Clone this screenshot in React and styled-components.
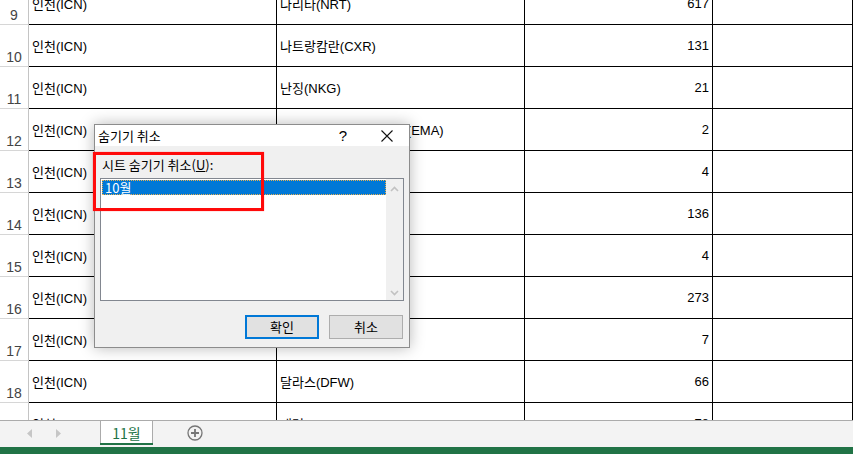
import React from 'react'
import styled, { createGlobalStyle } from 'styled-components'

const GlobalStyle = createGlobalStyle`
  html, body {
    margin: 0;
    padding: 0;
    overflow: hidden;
    background: #fff;
  }
  * { box-sizing: border-box; }
`

const Page = styled.div`
  position: relative;
  width: 853px;
  height: 454px;
  display: flex;
  flex-direction: column;
  overflow: hidden;
  font-family: "Liberation Sans", "Noto Sans CJK KR", sans-serif;
`

const Sheet = styled.div`
  height: 420px;
  overflow: hidden;
  flex-shrink: 0;
`

const Rows = styled.div`
  margin-top: -17px;
  display: flex;
  flex-direction: column;
`

const Row = styled.div`
  display: grid;
  grid-template-columns: 29px 248px 248px 188px 1fr;
  height: 42px;
`

const RowHead = styled.div`
  border-right: 1px solid #c4c4c4;
  border-bottom: 1px solid #d6d6d6;
  display: flex;
  align-items: flex-end;
  justify-content: center;
  padding-bottom: 1px;
  font-size: 14px;
  color: #444;
  line-height: 16px;
`

const Cell = styled.div`
  border-right: 1px solid #000;
  border-bottom: 1px solid #000;
  display: flex;
  align-items: center;
  justify-content: ${p => (p.$right ? 'flex-end' : 'flex-start')};
  padding: 0 3px 0 ${p => (p.$right ? '0' : '3px')};
  font-size: 13px;
  color: #000;
  white-space: pre;
  overflow: hidden;
`

const TabBar = styled.div`
  height: 27px;
  background: #f3f3f3;
  border-top: 1px solid #ababab;
  display: flex;
  align-items: flex-start;
`

const NavGroup = styled.div`
  width: 100px;
  height: 24px;
  display: flex;
  align-items: center;
  gap: 21px;
  padding-left: 25px;
`

const NavArrow = styled.span`
  width: 8px;
  height: 10px;
  display: flex;
  align-items: center;
  justify-content: center;
`

const Tab = styled.div`
  width: 53px;
  height: 24px;
  margin-top: -1px;
  background: #fff;
  border: 1px solid #ababab;
  border-bottom: none;
  display: flex;
  align-items: center;
  justify-content: center;
  position: relative;
  color: #217346;
  font-size: 14px;
  font-family: "Noto Sans CJK KR", "Liberation Sans", sans-serif;
  &::after {
    content: '';
    position: absolute;
    left: -1px;
    right: -1px;
    bottom: -1px;
    height: 2px;
    background: #217346;
  }
`

const AddSheet = styled.div`
  margin-left: 34px;
  height: 24px;
  display: flex;
  align-items: center;
`

const StatusBar = styled.div`
  height: 7px;
  background: #217346;
`

const Dialog = styled.div`
  position: absolute;
  left: 94px;
  top: 124px;
  width: 316px;
  height: 224px;
  border: 1px solid #8c8c8c;
  background: #f0f0f0;
  box-shadow: 0 0 14px rgba(0, 0, 0, 0.28);
  display: flex;
  flex-direction: column;
  font-family: "Noto Sans CJK KR", "Liberation Sans", sans-serif;
  font-size: 13px;
  color: #000;
`

const TitleBar = styled.div`
  height: 21px;
  background: #fff;
  display: flex;
  align-items: center;
  padding-left: 3px;
`

const Title = styled.span`
  flex: 1;
  font-size: 13px;
`

const TitleButton = styled.span`
  width: 44px;
  display: flex;
  justify-content: center;
  align-items: center;
  font-size: 15px;
  font-family: "Liberation Sans", sans-serif;
`

const Body = styled.div`
  flex: 1;
  padding: 11px 5px 0 5px;
  display: flex;
  flex-direction: column;
`

const Label = styled.div`
  line-height: 15px;
  padding-left: 2px;
  margin-bottom: 6px;
  u { text-decoration: underline; }
`

const ListBox = styled.div`
  height: 123px;
  background: #fff;
  border: 1px solid #828790;
  display: flex;
`

const ListItems = styled.div`
  flex: 1;
  padding: 1px 0 0 1px;
`

const ListItem = styled.div`
  height: 15px;
  line-height: 13px;
  padding-left: 2px;
  background: ${p => (p.$selected ? '#0078d7' : 'transparent')};
  color: ${p => (p.$selected ? '#fff' : '#000')};
  border: 1px dotted ${p => (p.$selected ? '#e8b050' : 'transparent')};
  font-size: 13px;
`

const ScrollTrack = styled.div`
  width: 17px;
  background: #f0f0f0;
  display: flex;
  flex-direction: column;
  justify-content: space-between;
  align-items: center;
  padding: 7px 0 4px;
`

const ButtonRow = styled.div`
  display: flex;
  justify-content: flex-end;
  gap: 10px;
  margin-top: 14px;
  padding-right: 1px;
`

const DialogButton = styled.button`
  width: 74px;
  height: 24px;
  background: #e1e1e1;
  border: ${p => (p.$primary ? '2px solid #0078d7' : '1px solid #adadad')};
  font-family: "Noto Sans CJK KR", "Liberation Sans", sans-serif;
  font-size: 13px;
  line-height: 18px;
  color: #000;
  padding: 0;
`

const Highlight = styled.div`
  position: absolute;
  left: 93px;
  top: 152px;
  width: 171px;
  height: 59px;
  border: 3px solid #ff0a0a;
  box-shadow: 0 0 1px rgba(255, 0, 0, 0.5);
  pointer-events: none;
`

const rows = [
  ['9', '인천(ICN)', '나리타(NRT)', '617'],
  ['10', '인천(ICN)', '나트랑캄란(CXR)', '131'],
  ['11', '인천(ICN)', '난징(NKG)', '21'],
  ['12', '인천(ICN)', '노팅엄 이스트 미들랜즈(EMA)', '2'],
  ['13', '인천(ICN)', '뉴어크(EWR)', '4'],
  ['14', '인천(ICN)', '뉴욕(JFK)', '136'],
  ['15', '인천(ICN)', '니가타(KIJ)', '4'],
  ['16', '인천(ICN)', '다낭(DAD)', '273'],
  ['17', '인천(ICN)', '다카(DAC)', '7'],
  ['18', '인천(ICN)', '달라스(DFW)', '66'],
  ['19', '인천(ICN)', '대련(DLC)', '78'],
]

const Chevron = ({ up }) => (
  <svg width="9" height="6" viewBox="0 0 9 6">
    <path
      d={up ? 'M1 5 L4.5 1.5 L8 5' : 'M1 1 L4.5 4.5 L8 1'}
      fill="none"
      stroke="#c2c2c2"
      strokeWidth="1.6"
    />
  </svg>
)

const App = () => {
  return (
    <Page>
      <GlobalStyle />
      <Sheet>
        <Rows>
          {rows.map(([n, a, b, c]) => (
            <Row key={n}>
              <RowHead>{n}</RowHead>
              <Cell>{a}</Cell>
              <Cell>{b}</Cell>
              <Cell $right>{c}</Cell>
              <Cell />
            </Row>
          ))}
        </Rows>
      </Sheet>
      <TabBar>
        <NavGroup>
          <NavArrow>
            <svg width="5" height="9" viewBox="0 0 5 9">
              <path d="M5 0 L0 4.5 L5 9 Z" fill="#c6c6c6" />
            </svg>
          </NavArrow>
          <NavArrow>
            <svg width="5" height="9" viewBox="0 0 5 9">
              <path d="M0 0 L5 4.5 L0 9 Z" fill="#c6c6c6" />
            </svg>
          </NavArrow>
        </NavGroup>
        <Tab>11월</Tab>
        <AddSheet>
          <svg width="16" height="16" viewBox="0 0 16 16">
            <circle cx="8" cy="8" r="7" fill="none" stroke="#767676" strokeWidth="1.3" />
            <path d="M8 4 V12 M4 8 H12" stroke="#767676" strokeWidth="1.8" />
          </svg>
        </AddSheet>
      </TabBar>
      <StatusBar />

      <Dialog>
        <TitleBar>
          <Title>숨기기 취소</Title>
          <TitleButton>?</TitleButton>
          <TitleButton>
            <svg width="12" height="12" viewBox="0 0 12 12">
              <path d="M0.5 0.5 L11.5 11.5 M11.5 0.5 L0.5 11.5" stroke="#111" strokeWidth="1.1" />
            </svg>
          </TitleButton>
        </TitleBar>
        <Body>
          <Label>
            시트 숨기기 취소(<u>U</u>):
          </Label>
          <ListBox>
            <ListItems>
              <ListItem $selected>10월</ListItem>
            </ListItems>
            <ScrollTrack>
              <Chevron up />
              <Chevron />
            </ScrollTrack>
          </ListBox>
          <ButtonRow>
            <DialogButton $primary>확인</DialogButton>
            <DialogButton>취소</DialogButton>
          </ButtonRow>
        </Body>
      </Dialog>
      <Highlight />
    </Page>
  )
}

export default App
